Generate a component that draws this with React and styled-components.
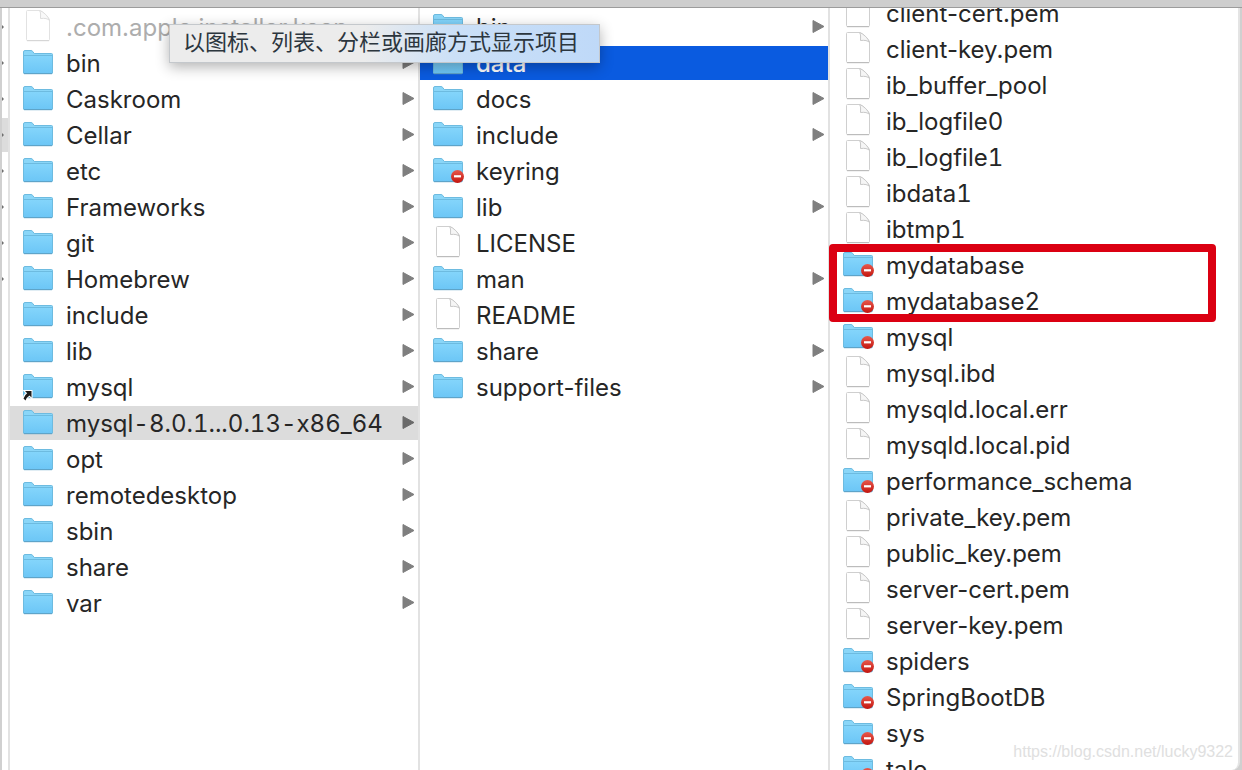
import { useId } from "react";
import styled, { createGlobalStyle } from "styled-components";

const GlobalStyle = createGlobalStyle`
  * {
    box-sizing: border-box;
  }

  body {
    background-color: #fff;
    font-family: Inter, "Noto Sans CJK SC", sans-serif;
    margin: 0;
  }
`;

const Window = styled.main`
  display: flex;
  flex-direction: column;
  height: 100vh;
  overflow: hidden;
  position: relative;
`;

const Toolbar = styled.header`
  background-color: #cecece;
  border-bottom: 1px solid #9c9c9c;
  flex: none;
  height: 8px;
`;

const Browser = styled.div`
  background-color: #d0d0d0;
  display: flex;
  flex: 1;
  min-height: 0;
  overflow: hidden;
  padding: 0 2px;
`;

const Pane = styled.div`
  background-color: #fff;
  border-bottom-right-radius: 8px;
  border-right: 2px solid #e4e4e4;
  display: flex;
  flex: 1;
`;

const Strip = styled.div`
  flex: none;
  overflow: hidden;
  padding-top: 1px;
  width: 6px;
`;

const StripRow = styled.div`
  align-items: center;
  background-color: ${({ $selected }) => ($selected ? "#dcdcdc" : "transparent")};
  display: flex;
  height: 34px;
  margin: 1px 0 2px;
`;

const StripTip = styled.span`
  border: 2px solid transparent;
  border-left-color: #6e6e6e;
  border-right: none;
`;

const Column = styled.ul`
  border-left: 2px solid #e2e2e2;
  flex: 1;
  list-style: none;
  margin: 0;
  min-width: 0;
  padding: 1px 0 0;
`;

const ScrolledColumn = styled(Column)`
  margin-top: -14px;
`;

const Group = styled.ul`
  list-style: none;
  margin: 0;
  padding: 0;
  position: relative;
`;

const Highlight = styled.div`
  border: 8px solid #db0012;
  border-radius: 4px;
  inset: -3px 22px -3px -1px;
  position: absolute;
`;

const Item = styled.li`
  height: 36px;
  padding: 1px 0;
`;

const Row = styled.button`
  align-items: center;
  background-color: ${({ $state }) =>
    $state === "active" ? "#0a5be0" : $state === "open" ? "#dcdcdc" : "transparent"};
  border: none;
  color: ${({ $state, $dimmed }) =>
    $dimmed ? "#adadad" : $state === "active" ? "#fff" : "#262626"};
  display: flex;
  font-family: inherit;
  font-size: 24px;
  font-weight: ${({ $state }) => ($state === "active" ? 500 : 400)};
  gap: 12px;
  height: 34px;
  line-height: 34px;
  padding: 0 3px 0 12px;
  text-align: left;
  width: 100%;
`;

const Name = styled.span`
  flex: 1;
  font-variant-numeric: ${({ $numeric }) => ($numeric ? "tabular-nums" : "normal")};
  min-width: 0;
  padding-top: 2px;
  white-space: nowrap;
`;

const Icon = styled.svg`
  display: block;
  flex: none;
  height: 34px;
  opacity: ${({ $dimmed }) => ($dimmed ? 0.6 : 1)};
  width: 32px;
`;

const Arrow = styled.svg`
  flex: none;
  height: 34px;
  width: 13px;
`;

const Tooltip = styled.div`
  background: linear-gradient(90deg, #ececec 45%, #cbe0f7 66%, #bfd9f8);
  border: 1px solid #c4c8cc;
  box-shadow: 0 4px 14px rgba(0, 0, 0, 0.3);
  color: #2c363e;
  font-size: 22px;
  left: 169px;
  line-height: 34px;
  padding: 0 20px 3px 13px;
  position: absolute;
  top: 24px;
  white-space: nowrap;
`;

const Watermark = styled.a`
  bottom: 8px;
  color: #e0e0e0;
  font-family: "Liberation Sans", Arial, sans-serif;
  font-size: 16px;
  line-height: 20px;
  position: absolute;
  right: 9px;
  text-decoration: none;
`;

const usr = [
  { name: ".com.apple.installer.keep", type: "file", dimmed: true },
  { name: "bin", arrow: true },
  { name: "Caskroom", arrow: true },
  { name: "Cellar", arrow: true },
  { name: "etc", arrow: true },
  { name: "Frameworks", arrow: true },
  { name: "git", arrow: true },
  { name: "Homebrew", arrow: true },
  { name: "include", arrow: true },
  { name: "lib", arrow: true },
  { name: "mysql", arrow: true, badge: "alias" },
  { name: "mysql-8.0.1...0.13-x86_64", arrow: true, state: "open" },
  { name: "opt", arrow: true },
  { name: "remotedesktop", arrow: true },
  { name: "sbin", arrow: true },
  { name: "share", arrow: true },
  { name: "var", arrow: true },
];

const mysql = [
  { name: "bin", arrow: true },
  { name: "data", state: "active" },
  { name: "docs", arrow: true },
  { name: "include", arrow: true },
  { name: "keyring", badge: "locked" },
  { name: "lib", arrow: true },
  { name: "LICENSE", type: "file" },
  { name: "man", arrow: true },
  { name: "README", type: "file" },
  { name: "share", arrow: true },
  { name: "support-files", arrow: true },
];

const file = (name) => ({ name, type: "file" });
const locked = (name) => ({ name, badge: "locked" });

const dataBefore = [
  "client-cert.pem",
  "client-key.pem",
  "ib_buffer_pool",
  "ib_logfile0",
  "ib_logfile1",
  "ibdata1",
  "ibtmp1",
].map(file);

const databases = ["mydatabase", "mydatabase2"].map(locked);

const dataAfter = [
  locked("mysql"),
  file("mysql.ibd"),
  file("mysqld.local.err"),
  file("mysqld.local.pid"),
  locked("performance_schema"),
  file("private_key.pem"),
  file("public_key.pem"),
  file("server-cert.pem"),
  file("server-key.pem"),
  locked("spiders"),
  locked("SpringBootDB"),
  locked("sys"),
  locked("tale"),
];

const FileIcon = ({ dimmed }) => (
  <Icon viewBox="0 0 32 34" $dimmed={dimmed} aria-hidden="true">
    <path
      d="M5.5 .5H17.5C21 1.5 26.5 6.5 27.5 10.5V29.5Q27.5 30.5 26.5 30.5H5.5Q4.5 30.5 4.5 29.5V1.5Q4.5 .5 5.5 .5Z"
      fill="#fff"
      stroke="#cfcfcf"
    />
    <path d="M5 30.7H27" stroke="#b8b8b8" />
    <path
      d="M17.5 .5C19 2.5 18.5 5 18.5 8.5C22.5 8 26 8.5 27.5 10.5C26.5 6.5 21 1.5 17.5 .5Z"
      fill="#f6f6f6"
      stroke="#c8c8c8"
      strokeLinejoin="round"
    />
  </Icon>
);

const FolderIcon = ({ badge }) => {
  const id = useId();

  return (
    <Icon viewBox="0 0 32 34" aria-hidden="true">
      <defs>
        <linearGradient id={`${id}-front`} x1="0" y1="0" x2="0" y2="1">
          <stop offset="0" stopColor="#84d5fb" />
          <stop offset="1" stopColor="#6cc6f6" />
        </linearGradient>
        <linearGradient id={`${id}-badge`} x1="0" y1="0" x2="0" y2="1">
          <stop offset="0" stopColor="#e8594c" />
          <stop offset="1" stopColor="#c3150f" />
        </linearGradient>
      </defs>
      <path
        d="M1.5 27V6Q1.5 4.5 3 4.5H9Q10 4.5 10.8 5.5L12.2 7.5H29.5Q30.5 7.5 30.5 8.5V27Z"
        fill="#8ad6f8"
        stroke="#6dbbe0"
      />
      <path
        d="M1.5 9.5H30.5V26.5Q30.5 27.5 29.5 27.5H2.5Q1.5 27.5 1.5 26.5Z"
        fill={`url(#${id}-front)`}
        stroke="#6dbbe0"
      />
      <path d="M2 27.7H30" stroke="#5c9fc4" />
      {badge === "locked" && (
        <>
          <circle cx="25.5" cy="22.5" r="6.5" fill={`url(#${id}-badge)`} />
          <rect x="22" y="21.2" width="7" height="2.2" fill="#fff" />
        </>
      )}
      {badge === "alias" && (
        <path
          d="M3 21H9.5V27.5L7.5 25.5Q5 27 3.5 30.5L1.5 28.5Q2.5 25 5.2 23.2Z"
          fill="#1b1b1b"
          stroke="#fff"
          strokeWidth="2"
          paintOrder="stroke"
        />
      )}
    </Icon>
  );
};

const Entry = ({ name, type, badge, arrow, state, dimmed }) => (
  <Item>
    <Row type="button" $state={state} $dimmed={dimmed}>
      {type === "file" ? <FileIcon dimmed={dimmed} /> : <FolderIcon badge={badge} />}
      <Name $numeric={/\d/.test(name)}>{name}</Name>
      {arrow && (
        <Arrow viewBox="0 0 13 34" aria-hidden="true">
          <path
            d="M1 10.5L12 16.5L1 22.5Z"
            fill={state === "open" ? "#6a6a6a" : "#7f7f7f"}
            stroke={state === "open" ? "#6a6a6a" : "#7f7f7f"}
            strokeLinejoin="round"
          />
        </Arrow>
      )}
    </Row>
  </Item>
);

const Entries = ({ items }) => items.map((item) => <Entry key={item.name} {...item} />);

export default function App() {
  return (
    <Window>
      <GlobalStyle />
      <Toolbar />

      <Browser>
        <Pane>
          <Strip>
            {[0, 1, 2, 3, 4, 5, 6, 7].map((row) => (
              <StripRow key={row} $selected={row === 3}>
                <StripTip />
              </StripRow>
            ))}
          </Strip>

          <Column>
            <Entries items={usr} />
          </Column>

          <Column>
            <Entries items={mysql} />
          </Column>

          <ScrolledColumn>
            <Entries items={dataBefore} />
            <li>
              <Group>
                <Entries items={databases} />
                <Highlight />
              </Group>
            </li>
            <Entries items={dataAfter} />
          </ScrolledColumn>
        </Pane>
      </Browser>

      <Tooltip role="tooltip">以图标、列表、分栏或画廊方式显示项目</Tooltip>
      <Watermark href="https://blog.csdn.net/lucky9322">
        https://blog.csdn.net/lucky9322
      </Watermark>
    </Window>
  );
}
